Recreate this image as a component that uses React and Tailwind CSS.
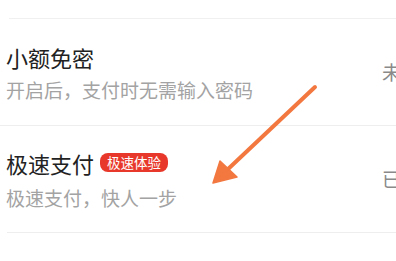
export default function App() {
  const font = { fontFamily: '"Noto Sans CJK SC", "Noto Sans", sans-serif' };
  return (
    <div className="relative w-[396px] h-[261px] overflow-hidden bg-white" style={font}>
      <div className="h-[19px] ml-[9px] border-b border-[#f0f0f0]" />

      <div className="flex items-center h-[107px] border-b border-[#eeeeee]">
        <div className="flex-1 pl-[6px]">
          <div className="text-[22px] leading-[28px] text-[#222222]">小额免密</div>
          <div className="mt-[7px] text-[19px] leading-[24px] text-[#a3a3a3]">开启后，支付时无需输入密码</div>
        </div>
        <div className="w-[14px] whitespace-nowrap text-[19px] text-[#8a8a8a]">未开启</div>
      </div>

      <div className="flex items-center h-[107px] ml-[7px] border-b border-[#eeeeee]">
        <div className="flex-1 -ml-[1px]">
          <div className="flex items-center">
            <span className="text-[22px] leading-[28px] text-[#222222]">极速支付</span>
            <span className="ml-[6px] h-[19px] px-[7px] rounded-[8px] bg-[#e8382b] text-white text-[13.5px] leading-[19px]">极速体验</span>
          </div>
          <div className="mt-[9px] text-[19px] leading-[24px] text-[#a3a3a3]">极速支付，快人一步</div>
        </div>
        <div className="w-[14px] whitespace-nowrap text-[19px] text-[#8a8a8a]">已开启</div>
      </div>

      <svg className="absolute left-0 top-0" width="396" height="261" viewBox="0 0 396 261">
        <line x1="315" y1="87" x2="226" y2="171" stroke="#f27840" strokeWidth="4" strokeLinecap="round" />
        <polygon points="213,183 220,161 237,177" fill="#f27840" stroke="#f27840" strokeWidth="1.5" strokeLinejoin="round" />
      </svg>
    </div>
  );
}
